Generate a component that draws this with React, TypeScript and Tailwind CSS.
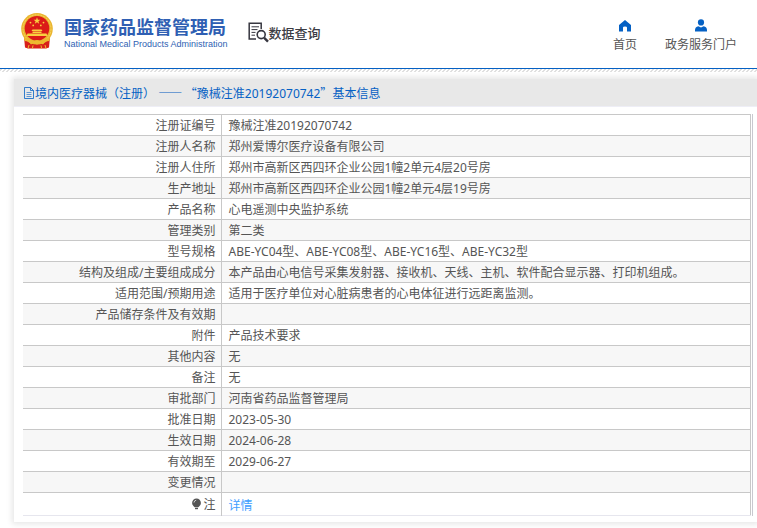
const navItems = [
  { text: "首页", href: "#home", icon: HomeIcon },
  { text: "政务服务门户", href: "#portal", icon: UserIcon },
];

const rows = [
  { label: "注册证编号", value: "豫械注准20192070742" },
  { label: "注册人名称", value: "郑州爱博尔医疗设备有限公司" },
  { label: "注册人住所", value: "郑州市高新区西四环企业公园1幢2单元4层20号房" },
  { label: "生产地址", value: "郑州市高新区西四环企业公园1幢2单元4层19号房" },
  { label: "产品名称", value: "心电遥测中央监护系统" },
  { label: "管理类别", value: "第二类" },
  {
    label: "型号规格",
    value: "ABE-YC04型、ABE-YC08型、ABE-YC16型、ABE-YC32型",
  },
  {
    label: "结构及组成/主要组成成分",
    value:
      "本产品由心电信号采集发射器、接收机、天线、主机、软件配合显示器、打印机组成。",
  },
  {
    label: "适用范围/预期用途",
    value: "适用于医疗单位对心脏病患者的心电体征进行远距离监测。",
  },
  { label: "产品储存条件及有效期", value: "" },
  { label: "附件", value: "产品技术要求" },
  { label: "其他内容", value: "无" },
  { label: "备注", value: "无" },
  { label: "审批部门", value: "河南省药品监督管理局" },
  { label: "批准日期", value: "2023-05-30" },
  { label: "生效日期", value: "2024-06-28" },
  { label: "有效期至", value: "2029-06-27" },
  { label: "变更情况", value: "" },
];

function HomeIcon() {
  return (
    <svg width="14" height="14" viewBox="0 0 14 14" fill="#0561c4" aria-hidden="true">
      <path d="M7 1 L13 6 V12.5 H9 V8.5 Q9 7.5 7 7.5 Q5 7.5 5 8.5 V12.5 H1 V6 Z" />
    </svg>
  );
}

function UserIcon() {
  return (
    <svg width="14" height="14" viewBox="0 0 14 14" fill="#0561c4" aria-hidden="true">
      <circle cx="7" cy="3.4" r="3.1" />
      <path d="M1 12.6 V11 Q1 8 4.4 7.2 L7 8.6 L9.6 7.2 Q13 8 13 11 V12.6 Z" />
    </svg>
  );
}

function FileIcon() {
  return (
    <svg width="12" height="12" viewBox="0 0 12 12" fill="none" stroke="#0561c4" aria-hidden="true">
      <path d="M1.5 0.5 H7.5 L10.5 3.5 V11.5 H1.5 Z" strokeOpacity="0.8" />
      <path d="M7.5 0.5 V3.5 H10.5" strokeOpacity="0.8" />
      <path d="M3.5 5.5 H8.5 M3.5 7.5 H8.5 M3.5 9.5 H8.5" strokeOpacity="0.6" />
    </svg>
  );
}

function BulbIcon() {
  return (
    <svg
      className="inline-block align-[-1px]"
      width="12"
      height="12"
      viewBox="0 0 12 12"
      aria-hidden="true"
    >
      <path
        d="M5.5 0.5 A4.4 4.4 0 0 1 9.9 4.9 C9.9 7 8.3 8 7.3 9.2 H3.7 C2.7 8 1.1 7 1.1 4.9 A4.4 4.4 0 0 1 5.5 0.5 Z"
        fill="#555"
      />
      <rect x="4" y="9.8" width="3" height="1.4" fill="#555" />
      <path d="M3 4.6 A2.6 2.6 0 0 1 5.2 2.2" fill="none" stroke="#ddd" strokeWidth="0.9" />
    </svg>
  );
}

function Emblem() {
  return (
    <svg width="34" height="38" viewBox="0 0 34 38" aria-hidden="true">
      <path d="M4 25 L5 35.5 L8 36.5 H26 L29 35.5 L30 25 Z" fill="#d8201a" />
      <circle cx="17" cy="16.8" r="15.8" fill="#eab52f" />
      <circle cx="17" cy="16.8" r="14" fill="none" stroke="#f8d765" strokeWidth="1" strokeDasharray="2 1" />
      <circle cx="17" cy="16.3" r="12.3" fill="#db1a18" />
      <path
        d="M17 5.2 L17.9 7.7 H20.5 L18.4 9.2 L19.2 11.7 L17 10.2 L14.8 11.7 L15.6 9.2 L13.5 7.7 H16.1 Z"
        fill="#f9cf3f"
      />
      <g fill="#f9cf3f">
        <circle cx="10.5" cy="10.6" r="0.9" />
        <circle cx="23.5" cy="10.6" r="0.9" />
        <circle cx="13.2" cy="13.4" r="0.9" />
        <circle cx="20.8" cy="13.4" r="0.9" />
        <path d="M12.5 17.4 H21.5 L22.5 19 H11.5 Z M12.5 19.4 H21.5 V21 H12.5 Z M7.5 21.4 H26.5 L27.5 24 H6.5 Z" />
      </g>
      <path
        d="M4 26 Q10 26 12.5 29.5 Q17 26.5 21.5 29.5 Q24 26 30 26 L29.4 29 Q25 29 23 32.4 L20 30.8 Q17 34 14 30.8 L11 32.4 Q9 29 4.6 29 Z"
        fill="#edb92f"
      />
      <path d="M9 33 L8 36.5 M25 33 L26 36.5 M13 33.4 L12.4 36.5 M21 33.4 L21.6 36.5" stroke="#edb92f" strokeWidth="1" />
    </svg>
  );
}

function SearchDocIcon() {
  return (
    <svg width="21" height="21" viewBox="0 0 21 21" fill="none" stroke="#36363f" aria-hidden="true">
      <path d="M8 17 H1.2 V1.2 H13.2 V7" strokeWidth="1.5" />
      <path d="M3.5 4.8 H11 M3.5 7.6 H9.5 M3.5 10.4 H7.5 M3.5 13.2 H7" strokeWidth="1" />
      <circle cx="13.2" cy="12.6" r="4" strokeWidth="1.6" />
      <path d="M16.2 15.8 L20 19.6" strokeWidth="2.4" />
    </svg>
  );
}

const Header = () => {
  return (
    <header className="flex h-[69px] items-start justify-between border-b border-[#0561c4] bg-white px-5">
      <div className="flex items-start">
        <a href="#top" className="flex items-start gap-[10px] pt-3">
          <Emblem />
          <span className="block pt-1 text-[#2f5fb3]">
            <span className="block text-[18px] font-bold leading-[22px] whitespace-nowrap">
              国家药品监督管理局
            </span>
            <span className="block font-['Liberation_Sans',sans-serif] text-[9px] leading-3 whitespace-nowrap">
              National Medical Products Administration
            </span>
          </span>
        </a>
        <a href="#search" className="ml-5 flex items-center pt-[22px] text-[#3c3c44]">
          <SearchDocIcon />
          <span className="text-[13px] font-medium leading-5 whitespace-nowrap">数据查询</span>
        </a>
      </div>
      <nav className="flex gap-7 pt-[19px]">
        {navItems.map((item) => (
          <a
            key={item.text}
            href={item.href}
            className="flex flex-col items-center gap-1 whitespace-nowrap text-[12px] leading-4 text-[#555]"
          >
            <item.icon />
            {item.text}
          </a>
        ))}
      </nav>
    </header>
  );
};

const InfoTable = () => {
  return (
    <div className="border-r border-[#c8c8cf] pr-px">
      <table className="w-full border-collapse border-b border-r border-t border-b-[#e6e6ee] border-r-[#c8c8c8] border-t-[#c8c8c8]">
        <tbody>
          {rows.map((row) => (
            <tr key={row.label} className="border-b border-[#c8c8c8] even:bg-[#f7f7f7]">
              <th
                scope="row"
                className="h-[21px] w-[198px] border-r border-[#c8c8c8] pr-[5px] pt-px text-right font-normal leading-[19px]"
              >
                {row.label}
              </th>
              <td className="pl-[7px] pt-px leading-[19px]">{row.value}</td>
            </tr>
          ))}
          <tr>
            <th
              scope="row"
              className="h-[23px] border-r border-[#c8c8c8] pr-[5px] pt-px text-right font-normal leading-[19px]"
            >
              <BulbIcon />注
            </th>
            <td className="pl-[7px] pt-[3px] leading-[19px]">
              <a href="#detail" className="text-[#409eff]">
                详情
              </a>
            </td>
          </tr>
        </tbody>
      </table>
    </div>
  );
};

export default function App() {
  return (
    <div
      lang="zh-CN"
      className="min-h-screen overflow-x-hidden bg-white font-['Noto_Sans','Noto_Sans_CJK_SC',sans-serif] text-[12px] leading-5 text-[#555]"
    >
      <Header />
      <div className="h-[3px] bg-[linear-gradient(135deg,#e0e0e0_25%,#fff_25%,#fff_50%,#e0e0e0_50%,#e0e0e0_75%,#fff_75%)] bg-[length:4px_4px]" />
      <main className="ml-[14px] mt-[7px] bg-white pb-[6px] shadow-[0_0_6px_2px_#e6e6e6]">
        <h1 className="flex h-7 items-center border-b border-[#eeeef6] bg-[#e8e8e8] pl-[9px] pt-px text-[12px] text-[#0561c4]">
          <FileIcon />
          <span className="whitespace-nowrap">
            境内医疗器械（注册）{" "}
            <span className="font-['Noto_Sans_CJK_SC',sans-serif]">—— “</span>
            豫械注准20192070742
            <span className="font-['Noto_Sans_CJK_SC',sans-serif]">”</span>
            基本信息
          </span>
        </h1>
        <div className="pl-[9px] pr-1 pt-[7px]">
          <InfoTable />
        </div>
      </main>
    </div>
  );
}
